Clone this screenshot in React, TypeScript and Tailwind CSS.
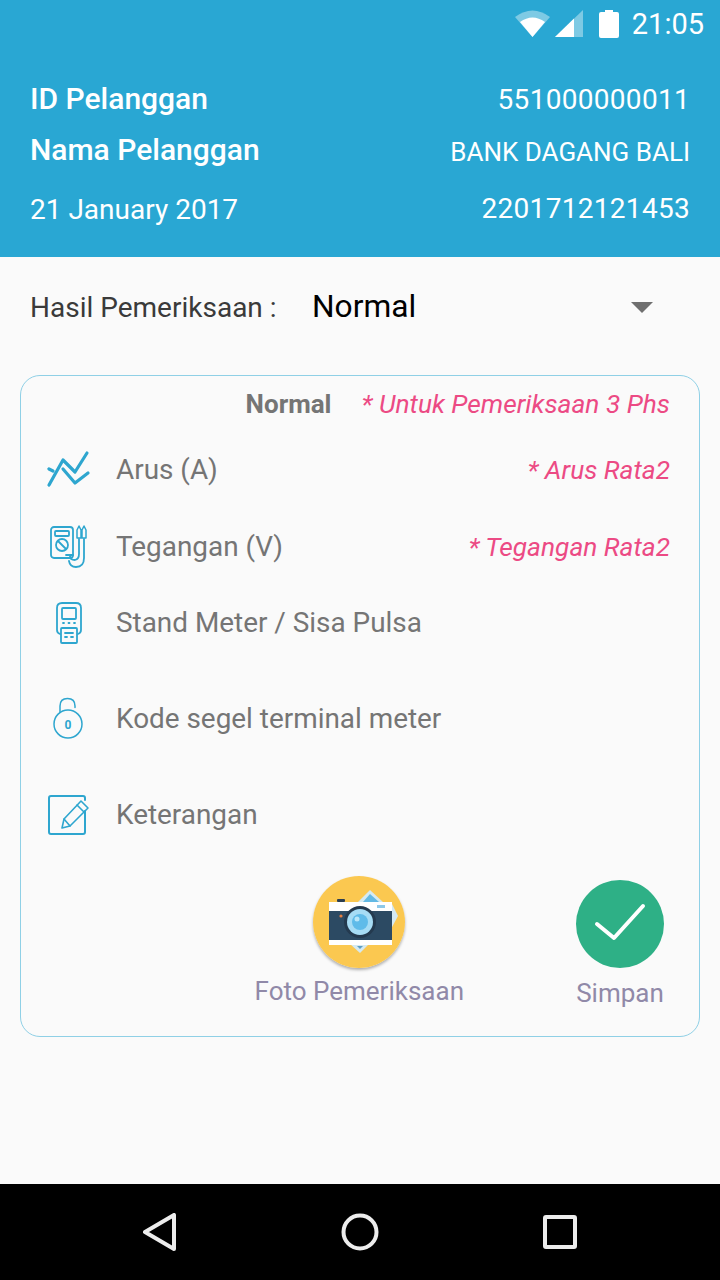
const iconBlue = '#2ea6cf'

function StatusIcons() {
  return (
    <svg width="117" height="40" viewBox="0 0 117 40">
      <path d="M0 13 Q17.5 0 35 13 L17.5 33 Z" fill="#fff" fillOpacity="0.4" />
      <path d="M5 18 Q17.5 9 30 18 L17.5 33 Z" fill="#fff" />
      <path d="M40 33 L68 6 V33 Z" fill="#fff" fillOpacity="0.4" />
      <path d="M40 33 L59 14.5 V33 Z" fill="#fff" />
      <path d="M84 10 Q84 8 86 8 H90 V6 H98 V8 H102 Q104 8 104 10 V32 Q104 34 102 34 H86 Q84 34 84 32 Z" fill="#fff" />
    </svg>
  )
}

function ArusIcon() {
  return (
    <svg width="46" height="40" viewBox="0 0 46 40" fill="none" stroke={iconBlue} strokeWidth="3.2" strokeLinecap="round" strokeLinejoin="round" className="mr-[2px]">
      <path d="M3 35 L17 10 L29 22 L41 3" />
      <path d="M17 19 L29 33 L42 23" />
      <path d="M3 19 L7 21" />
    </svg>
  )
}

function TeganganIcon() {
  return (
    <svg width="38" height="44" viewBox="0 0 38 44" fill="none" stroke={iconBlue} strokeWidth="1.8" strokeLinecap="round" strokeLinejoin="round" className="mr-[2px]">
      <rect x="1" y="2" width="22" height="31" rx="3" />
      <rect x="5" y="6" width="14" height="5" rx="1" />
      <circle cx="12" cy="20" r="6" />
      <path d="M8 16 L16 24" />
      <path d="M29 14 V29 Q29 34 25 35 Q20 35 20 31 M16 30 H23" />
      <path d="M34 14 V33 Q34 42 26 42 Q20 42 19 36" />
      <path d="M27 13 V5 L29 1 L31 5 V13 Z M32 13 V5 L34 1 L36 5 V13 Z" strokeWidth="1.5" />
    </svg>
  )
}

function StandIcon() {
  return (
    <svg width="26" height="42" viewBox="0 0 26 42" fill="none" stroke={iconBlue} strokeWidth="1.8" strokeLinecap="round" strokeLinejoin="round" className="mr-[2px]">
      <path d="M4 32 Q1 31 1 28 V6 Q1 1 6 1 H20 Q25 1 25 6 V28 Q25 31 22 32" />
      <rect x="6" y="6" width="14" height="11" rx="1" />
      <path d="M7 21 H8 M12.5 21 H13.5 M18 21 H19" />
      <rect x="5" y="26" width="16" height="15" rx="1" />
      <path d="M9 31 H17 M9 35 H11 M15 35 H17" />
    </svg>
  )
}

function KodeIcon() {
  return (
    <svg width="30" height="44" viewBox="0 0 30 44" fill="none" stroke={iconBlue} strokeWidth="1.5" strokeLinecap="round" className="mr-[4px]">
      <circle cx="15" cy="27" r="14" />
      <path d="M7 15.5 V9 Q7 1.5 14.5 1.5 Q22 1.5 22 9 V10.5" />
      <text x="15" y="31.5" textAnchor="middle" fontSize="12" fontWeight="700" fill={iconBlue} stroke="none" fontFamily="Roboto, sans-serif">0</text>
    </svg>
  )
}

function KeteranganIcon() {
  return (
    <svg width="42" height="42" viewBox="0 0 42 42" fill="none" stroke={iconBlue} strokeWidth="2" strokeLinecap="round" strokeLinejoin="round" className="mr-[2px]">
      <path d="M37 17 V38 Q37 40 35 40 H3 Q1 40 1 38 V4 Q1 2 3 2 H35 Q37 2 37 4 V6" />
      <path d="M33 7 L40 14 L22 32 L14 34 L16 25 Z" strokeWidth="1.6" />
      <path d="M29 11 L36 18 M16 25 L22 32" strokeWidth="1.6" />
    </svg>
  )
}

function CameraIcon() {
  return (
    <svg width="92" height="92" viewBox="0 0 92 92">
      <circle cx="46" cy="46" r="46" fill="#fbc850" />
      <path d="M44 27 L57 14 L71 27 Z" fill="#d5eaf2" />
      <path d="M50 26 L57 18 L66 26 Z" fill="#63b9e4" />
      <path d="M78 26 L85 40 L78 53 Z" fill="#d5eaf2" />
      <path d="M37 68 L47 77 L56 68 Z" fill="#d5eaf2" />
      <path d="M44 70 H50 L47 73 Z" fill="#5f9ec4" />
      <rect x="24" y="23" width="8" height="3" rx="1" fill="#2c3e50" />
      <rect x="16" y="26" width="63" height="9" fill="#ffffff" />
      <rect x="16" y="35" width="63" height="29" fill="#2c4a63" />
      <rect x="16" y="64" width="63" height="5" fill="#ffffff" />
      <rect x="64" y="29" width="8" height="3" fill="#8ec9ea" />
      <circle cx="28" cy="40" r="1.6" fill="#e67e40" />
      <circle cx="47" cy="46" r="16" fill="#243a4f" />
      <circle cx="47" cy="46" r="13" fill="#a6dcf5" />
      <circle cx="47" cy="46" r="8" fill="#5fbbe9" />
      <circle cx="44" cy="43" r="2.5" fill="#b9e6f9" />
    </svg>
  )
}

function SaveIcon() {
  return (
    <div className="flex h-[88px] w-[88px] items-center justify-center rounded-full bg-[#2eb086]">
      <svg width="88" height="88" viewBox="0 0 88 88" fill="none" stroke="#fff" strokeWidth="4" strokeLinecap="round" strokeLinejoin="round">
        <path d="M21 44 L38 58 L67 26" />
      </svg>
    </div>
  )
}

const rows = [
  { icon: <ArusIcon />, label: 'Arus (A)', note: '* Arus Rata2', height: 'h-[76px]' },
  { icon: <TeganganIcon />, label: 'Tegangan (V)', note: '* Tegangan Rata2', height: 'h-[77px]' },
  { icon: <StandIcon />, label: 'Stand Meter / Sisa Pulsa', note: '', height: 'h-[76px]' },
  { icon: <KodeIcon />, label: 'Kode segel terminal meter', note: '', height: 'h-[116px]' },
  { icon: <KeteranganIcon />, label: 'Keterangan', note: '', height: 'h-[76px]' },
]

export default function App() {
  return (
    <div className="flex h-[1280px] w-[720px] flex-col overflow-hidden bg-[#fafafa] font-['Roboto',sans-serif]">
      <header className="h-[257px] bg-[#29a7d3] text-white">
        <div className="flex h-[48px] items-center justify-end pr-[16px]">
          <StatusIcons />
          <span className="text-[29px] leading-none">21:05</span>
        </div>
        <div className="px-[30px] pt-[26px]">
          <div className="flex h-[51px] items-center justify-between">
            <span className="pb-[2px] text-[30px] font-medium">ID Pelanggan</span>
            <span className="text-[28px] tracking-[0.3px]">551000000011</span>
          </div>
          <div className="flex h-[51px] items-center justify-between">
            <span className="pb-[2px] text-[30px] font-medium">Nama Pelanggan</span>
            <span className="pt-[4px] text-[26px]">BANK DAGANG BALI</span>
          </div>
          <div className="mt-[7px] flex h-[51px] items-center justify-between">
            <span className="pt-[2px] text-[28px]">21 January 2017</span>
            <span className="text-[28px] tracking-[0.3px]">2201712121453</span>
          </div>
        </div>
      </header>

      <main className="flex-1 px-[20px]">
        <div className="flex h-[100px] items-center pl-[10px]">
          <span className="w-[282px] pt-[2px] text-[28px] text-[#3a3a3a]">Hasil Pemeriksaan :</span>
          <span className="flex-1 text-[31.7px] text-black">Normal</span>
          <span className="mr-[47px] h-0 w-0 border-x-[11px] border-t-[11px] border-x-transparent border-t-[#6f6f6f]" />
        </div>

        <div className="mt-[18px] h-[662px] rounded-[20px] border border-[#8fd0e6] pr-[29px]">
          <div className="flex h-[56px] items-center justify-end">
            <span className="mr-[30px] text-[26px] font-bold text-[#757575]">Normal</span>
            <span className="pt-[2px] text-[26.3px] italic text-[#ec4a84]">* Untuk Pemeriksaan 3 Phs</span>
          </div>
          {rows.map((row) => (
            <div key={row.label} className={`flex items-center ${row.height}`}>
              <div className="flex w-[95px] shrink-0 justify-center pl-[3px]">{row.icon}</div>
              <span className="flex-1 text-[27.9px] text-[#757575]">{row.label}</span>
              {row.note && <span className="pt-[2px] text-[26.3px] italic text-[#ec4a84]">{row.note}</span>}
            </div>
          ))}
          <div className="flex justify-end pt-[23px]">
            <div className="mr-[112px] flex flex-col items-center">
              <div className="rounded-full shadow-[0_2px_3px_rgba(0,0,0,0.3)]">
                <CameraIcon />
              </div>
              <span className="mt-[4px] text-[26px] text-[#9089a8]">Foto Pemeriksaan</span>
            </div>
            <div className="mr-[6px] flex flex-col items-center pt-[4px]">
              <SaveIcon />
              <span className="mt-[6px] text-[26px] text-[#9089a8]">Simpan</span>
            </div>
          </div>
        </div>
      </main>

      <nav className="flex h-[96px] items-center justify-center bg-black">
        <div className="flex w-[520px] justify-between px-[43px]">
          <svg width="34" height="38" viewBox="0 0 34 38" fill="none" stroke="#ededed" strokeWidth="4" strokeLinejoin="round">
            <path d="M31 2 V36 L2 19 Z" />
          </svg>
          <svg width="38" height="38" viewBox="0 0 38 38" fill="none" stroke="#ededed" strokeWidth="4">
            <circle cx="19" cy="19" r="16.5" />
          </svg>
          <svg width="34" height="34" viewBox="0 0 34 34" fill="none" stroke="#ededed" strokeWidth="4" strokeLinejoin="round" className="mt-[2px]">
            <rect x="2" y="2" width="30" height="30" rx="1" />
          </svg>
        </div>
      </nav>
    </div>
  )
}
